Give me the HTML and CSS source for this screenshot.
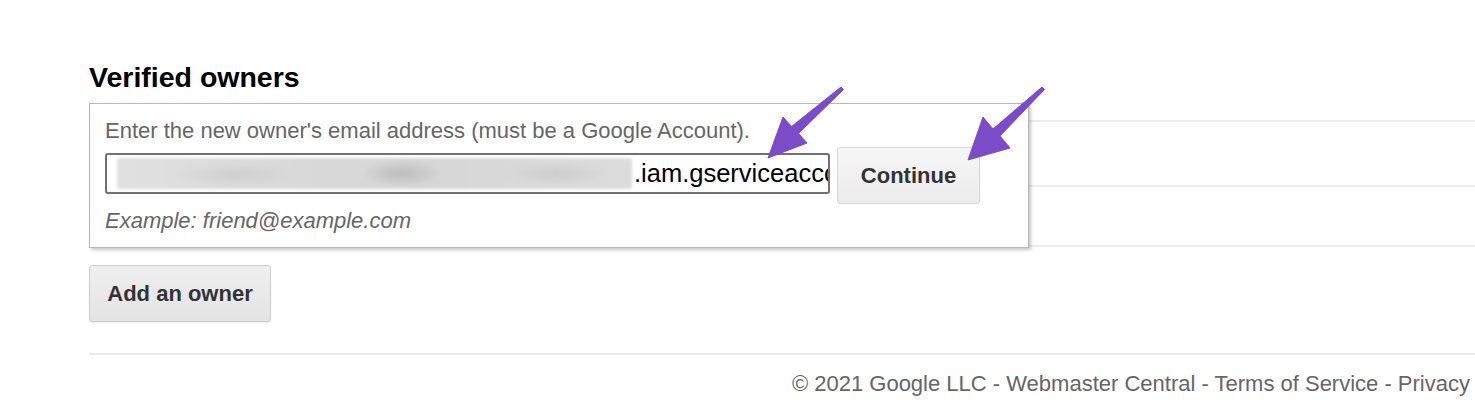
FILE: index.html
```html
<!DOCTYPE html>
<html>
<head>
<meta charset="utf-8">
<link rel="stylesheet" href="styles.css">
</head>
<body>
<main class="page">
  <h2 class="title">Verified owners</h2>
  <section class="owners">
    <div class="rows">
      <div class="row row-head"></div>
      <div class="row row-a"></div>
      <div class="row row-b"></div>
    </div>
    <div class="dialog">
      <p class="prompt">Enter the new owner's email address (must be a Google Account).</p>
      <div class="entry">
        <div class="field">
          <span class="blur"></span>
          <span class="value">.iam.gserviceaccount.com</span>
        </div>
        <button class="btn continue">Continue</button>
      </div>
      <p class="example">Example: friend@example.com</p>
    </div>
  </section>
  <button class="btn add">Add an owner</button>
  <footer class="footer">© 2021 Google LLC - Webmaster Central - Terms of Service - Privacy</footer>
</main>
<svg class="arrows" width="1475" height="404" viewBox="0 0 1475 404">
  <polygon points="841,87 791.5,126.5 783,117 768,158 807,143 798.5,133.5 843.5,89.5" />
  <polygon points="1042,87 993,129 983,117 968,160 1010,148 1000,136 1044.5,89.5" />
</svg>
</body>
</html>
```

FILE: styles.css
```css
html, body {
  margin: 0;
  padding: 0;
  background: #fff;
  overflow: hidden;
}
body {
  font-family: "Liberation Sans", Arial, Helvetica, sans-serif;
  width: 1475px;
  height: 404px;
  position: relative;
}
.page {
  padding: 61px 0 0 89px;
}
.title {
  margin: 0 0 10px;
  font-size: 28.5px;
  line-height: 32px;
  font-weight: bold;
  color: #000;
}
.owners {
  position: relative;
  height: 145px;
}
.rows {
  display: flex;
  flex-direction: column;
}
.row {
  border-bottom: 2px solid #ececec;
}
.row-head { height: 17px; }
.row-a { height: 63px; }
.row-b { height: 58px; }
.dialog {
  position: absolute;
  left: 0;
  top: 0;
  width: 940px;
  height: 145px;
  box-sizing: border-box;
  background: #fff;
  border: 1px solid #b8b8b8;
  box-shadow: 2px 2px 3px rgba(0, 0, 0, 0.22);
  padding: 15px 0 0 15px;
}
.prompt {
  margin: 0;
  font-size: 22px;
  line-height: 24px;
  color: #666;
}
.entry {
  display: flex;
  align-items: flex-start;
  gap: 7px;
  margin-top: 4px;
}
.field {
  margin-top: 6px;
  width: 725px;
  height: 41px;
  box-sizing: border-box;
  border: 2px solid #717171;
  border-radius: 3px;
  display: flex;
  align-items: center;
  padding-left: 10px;
  overflow: hidden;
  white-space: nowrap;
}
.blur {
  flex: none;
  width: 515px;
  height: 31px;
  background:
    radial-gradient(ellipse 40px 14px at 285px 50%, #bdbdbd, rgba(200,200,200,0) 100%),
    radial-gradient(ellipse 60px 12px at 120px 55%, #cfcfcf, rgba(210,210,210,0) 100%),
    radial-gradient(ellipse 50px 12px at 440px 50%, #cdcdcd, rgba(210,210,210,0) 100%),
    linear-gradient(90deg, #e0e0e0, #d8d8d8 40%, #d6d6d6 60%, #dcdcdc);
  filter: blur(1.5px);
  border-radius: 2px;
}
.value {
  flex: none;
  font-size: 25.5px;
  color: #000;
  padding-left: 2px;
}
.btn {
  font-family: "Liberation Sans", Arial, Helvetica, sans-serif;
  font-weight: bold;
  font-size: 22px;
  color: #333;
  background: linear-gradient(#f6f6f6, #ececec);
  border: 1px solid #d6d6d6;
  border-radius: 3px;
  box-sizing: border-box;
  padding: 0;
}
.continue {
  width: 143px;
  height: 57px;
}
.example {
  margin: 5px 0 0;
  font-size: 22px;
  line-height: 24px;
  font-style: italic;
  color: #666;
}
.add {
  display: block;
  margin-top: 17px;
  width: 182px;
  height: 57px;
  background: linear-gradient(#efefef, #e3e3e3);
  border-color: #cfcfcf;
  box-shadow: 0 1px 2px rgba(0, 0, 0, 0.08);
}
.footer {
  margin-top: 31px;
  border-top: 2px solid #ebebeb;
  padding: 17px 5px 0 0;
  text-align: right;
  font-size: 22px;
  line-height: 24px;
  color: #666;
  white-space: nowrap;
}
.arrows {
  position: absolute;
  left: 0;
  top: 0;
  pointer-events: none;
}
.arrows polygon {
  fill: #7b4bc8;
  stroke: #7b4bc8;
  stroke-width: 1;
  stroke-linejoin: round;
}
```
